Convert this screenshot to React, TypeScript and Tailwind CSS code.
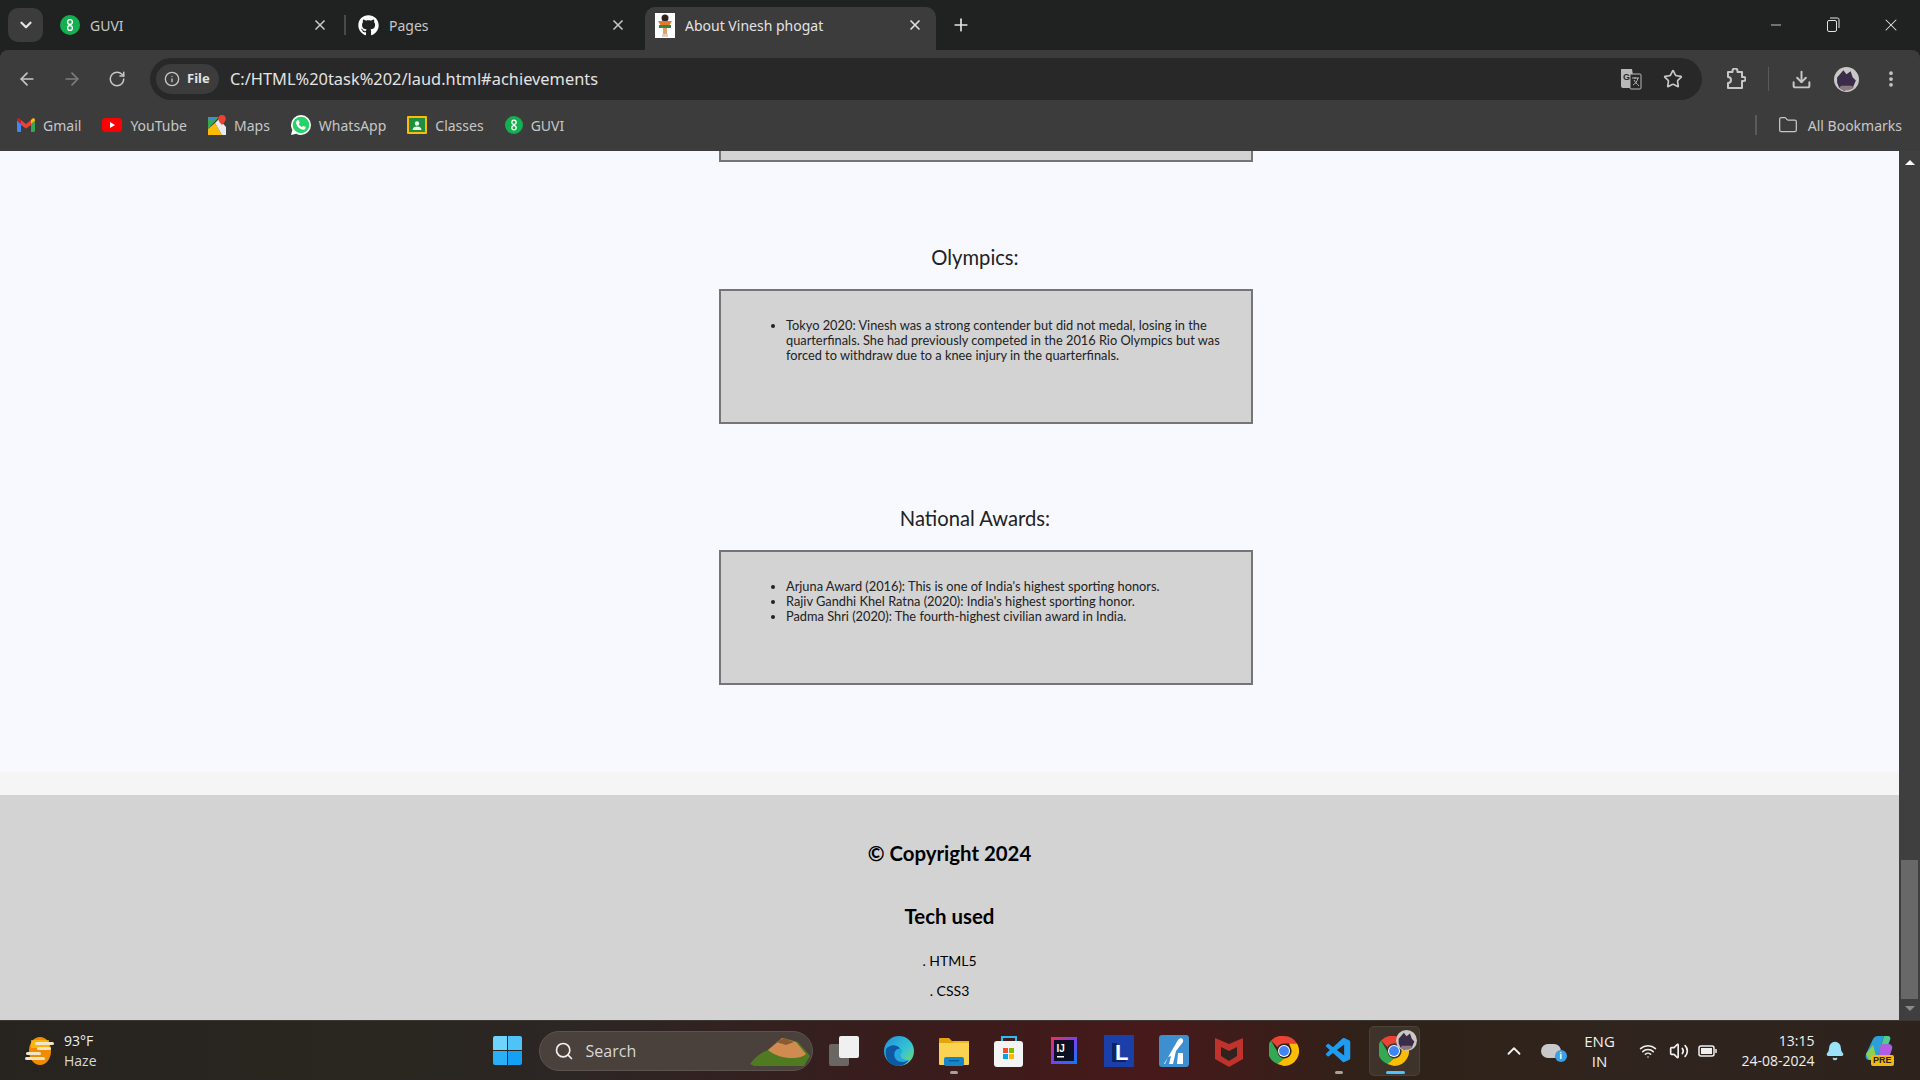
import { ArrowLeft, ArrowRight, RotateCw, Info, X, Plus, ChevronDown, ChevronUp, Star, Download, MoreVertical, Folder, Minus, Search, Bell, Wifi, Volume2 } from 'lucide-react';
import { FaGithub } from 'react-icons/fa';
import { VscVscode } from 'react-icons/vsc';

function GuviIcon({ size = 20 }: { size?: number }) {
  return (
    <svg width={size} height={size} viewBox="0 0 20 20">
      <circle cx="10" cy="10" r="10" fill="#14b04f" />
      <circle cx="10" cy="7" r="2.4" fill="none" stroke="#fff" strokeWidth="1.4" />
      <circle cx="10" cy="13" r="2.4" fill="none" stroke="#fff" strokeWidth="1.4" />
    </svg>
  );
}

function GmailIcon() {
  return (
    <svg width="18" height="14" viewBox="0 0 18 14">
      <path d="M0 2v10.500A1.500 1.500 0 0 0 1.500 14H4V6z" fill="#4285f4" />
      <path d="M18 2v10.500a1.500 1.500 0 0 1-1.500 1.500H14V6z" fill="#34a853" />
      <path d="M4 7 9 10.500 14 7V2L9 6 4 2z" fill="#ea4335" />
      <path d="M0 2.500 4 6V2L2.500.6C1.500-.2 0 .5 0 2z" fill="#c5221f" />
      <path d="M18 2.500 14 6V2l1.500-1.400C16.500-.2 18 .5 18 2z" fill="#fbbc04" />
    </svg>
  );
}

function YoutubeIcon() {
  return (
    <svg width="20" height="14" viewBox="0 0 20 14">
      <rect width="20" height="14" rx="3.500" fill="#f00" />
      <path d="M8 4v6l5-3z" fill="#fff" />
    </svg>
  );
}

function MapsIcon() {
  return (
    <svg width="18" height="20" viewBox="0 0 18 20">
      <path d="M0 2h11L0 14z" fill="#34a853" />
      <path d="M0 14 7 8l7 12H0z" fill="#fbbc04" />
      <path d="M7 8l4-4 7 8v8h-4z" fill="#e8eaed" />
      <path d="M0 2h8L4 6 0 3z" fill="#4285f4" />
      <path d="M14 0a3.800 3.800 0 0 1 3.800 3.800C17.800 6.500 14 10 14 10s-3.800-3.500-3.800-6.200A3.800 3.800 0 0 1 14 0z" fill="#ea4335" />
    </svg>
  );
}

function WhatsappIcon() {
  return (
    <svg width="20" height="20" viewBox="0 0 20 20">
      <path d="M10 0a10 10 0 0 1 0 20c-1.800 0-3.400-.4-4.800-1.200L0 20l1.300-5C.5 13.500 0 11.800 0 10A10 10 0 0 1 10 0z" fill="#fff" />
      <circle cx="10" cy="10" r="8.300" fill="#25d366" />
      <path d="M7 5c.5 0 .8.200 1 .8l.6 1.500c.1.400 0 .7-.3 1l-.6.700c.7 1.400 1.800 2.400 3.200 3.100l.8-.8c.3-.3.600-.3 1-.2l1.500.7c.5.200.6.600.5 1-.2 1.200-1.200 2-2.500 1.900-3.700-.4-6.700-3.400-7.100-7C5 6.300 5.800 5.200 7 5z" fill="#fff" />
    </svg>
  );
}

function ClassesIcon() {
  return (
    <svg width="20" height="18" viewBox="0 0 20 18">
      <rect width="20" height="18" rx="1" fill="#fbbc04" />
      <rect x="2" y="2" width="16" height="14" fill="#1e8e3e" />
      <circle cx="10" cy="7.500" r="2.200" fill="#e6f4ea" />
      <path d="M5.500 14c0-2.500 2-3.500 4.500-3.500s4.500 1 4.500 3.500z" fill="#e6f4ea" />
    </svg>
  );
}

function TabFace() {
  return (
    <svg width="20" height="25" viewBox="0 0 20 25">
      <rect width="20" height="25" fill="#fff" />
      <circle cx="10" cy="5" r="3.500" fill="#2b2320" />
      <path d="M3 8h14l-3 5H6z" fill="#e8772e" />
      <rect x="4" y="12" width="12" height="3" fill="#2e8b3d" />
      <rect x="8" y="15" width="4" height="6" fill="#e3a06a" />
      <rect x="7" y="21" width="6" height="3" fill="#d9cfc6" />
    </svg>
  );
}

function Avatar({ size }: { size: number }) {
  return (
    <svg width={size} height={size} viewBox="0 0 24 24">
      <circle cx="12" cy="12" r="12" fill="#c9c8c4" />
      <path d="M3 10 9 3l3 4 4-3 2 6 3 3-3 7-5-1-3 4-5-3-2-5z" fill="#3b2c4a" />
      <path d="M5 20c3 3 9 4 14 0l-2-2H7z" fill="#8a7a80" />
    </svg>
  );
}

function ChromeIcon() {
  return (
    <svg width="30" height="30" viewBox="0 0 30 30">
      <path d="M15 0a15 15 0 0 1 13 7.500H15a7.500 7.500 0 0 0-6.500 3.750L2 4.500A15 15 0 0 1 15 0z" fill="#ea4335" />
      <path d="M2 4.500l6.500 11.250A7.500 7.500 0 0 0 15 22.500L8.500 28A15 15 0 0 1 2 4.500z" fill="#34a853" />
      <path d="M28 7.500A15 15 0 0 1 15 30l-6.500-2 6.500-5.500a7.500 7.500 0 0 0 6.500-11.250L20 7.500z" fill="#fbbc04" />
      <circle cx="15" cy="15" r="6" fill="#fff" />
      <circle cx="15" cy="15" r="5" fill="#4285f4" />
    </svg>
  );
}

function EdgeIcon() {
  return (
    <svg width="30" height="32" viewBox="0 0 30 32">
      <defs>
        <linearGradient id="edgeTop" x1="0" y1="0" x2="1" y2="1">
          <stop offset="0" stopColor="#1d8fe0" />
          <stop offset="0.6" stopColor="#37c6d0" />
          <stop offset="1" stopColor="#7fdb50" />
        </linearGradient>
      </defs>
      <circle cx="15" cy="16" r="15" fill="url(#edgeTop)" />
      <path d="M2 14c4-5 12-5 14 0 1 2-2 3-2 6 0 4 5 7 11 5-3 4-7 6-11 6C6 31 0 24 2 14z" fill="#0c59a4" />
      <path d="M11 23c-2-5 1-10 5-9 2 .5 3 2 2 3-2 2-2 5 1 7 2 1 4 1 6 1-4 3-12 3-14-2z" fill="#28a4e0" />
    </svg>
  );
}

function ExplorerIcon() {
  return (
    <svg width="30" height="30" viewBox="0 0 30 30">
      <path d="M0 3a1 1 0 0 1 1-1h9l3 3h16a1 1 0 0 1 1 1v4H0z" fill="#e3a50b" />
      <path d="M0 7h30v21a1 1 0 0 1-1 1H1a1 1 0 0 1-1-1z" fill="#fbd352" />
      <path d="M5 7h8l2-2h15v2z" fill="#f2b81c" />
      <rect x="5" y="21" width="20" height="9" rx="2" fill="#1586c9" />
      <rect x="10" y="24" width="10" height="1.500" fill="#0c5e96" />
    </svg>
  );
}

function StoreIcon() {
  return (
    <svg width="30" height="32" viewBox="0 0 30 32">
      <path d="M8 6V2h14v4" fill="none" stroke="#2bbcf0" strokeWidth="2" />
      <rect y="6" width="29" height="26" rx="3" fill="#f4f4f4" />
      <rect x="9" y="13" width="5" height="5" fill="#f25022" />
      <rect x="15" y="13" width="5" height="5" fill="#7fba00" />
      <rect x="9" y="19" width="5" height="5" fill="#00a4ef" />
      <rect x="15" y="19" width="5" height="5" fill="#ffb900" />
    </svg>
  );
}

function IntellijIcon() {
  return (
    <svg width="26" height="27" viewBox="0 0 26 27">
      <defs>
        <linearGradient id="ijEdge" x1="0" y1="0" x2="1" y2="1">
          <stop offset="0" stopColor="#fe2857" />
          <stop offset="0.5" stopColor="#7a3ff0" />
          <stop offset="1" stopColor="#087cfa" />
        </linearGradient>
      </defs>
      <rect width="26" height="27" fill="url(#ijEdge)" />
      <rect x="3" y="3" width="20" height="21" fill="#0b1024" />
      <rect x="6" y="19" width="7" height="1.500" fill="#fff" />
      <text x="5.500" y="14.500" fill="#fff" fontSize="10" fontWeight="700" fontFamily="Liberation Sans, sans-serif">IJ</text>
    </svg>
  );
}

function LetterLIcon() {
  return (
    <svg width="30" height="32" viewBox="0 0 30 32">
      <rect width="30" height="32" fill="#1b3fa8" />
      <path d="M8 8h5v16h9v3H8z" fill="#0d2360" />
      <text x="11" y="25" fill="#fff" fontSize="22" fontWeight="700" fontFamily="Liberation Sans, sans-serif">L</text>
    </svg>
  );
}

function AnalyzerIcon() {
  return (
    <svg width="30" height="32" viewBox="0 0 30 32">
      <rect width="30" height="32" rx="3" fill="#3d8fd0" />
      <path d="M5 29 19 5c2-3 6-2 5 2l-7 9-3 13H10l2-8-3 1-3 7z" fill="#fff" />
      <path d="M19 18h5v11h-6z" fill="#fff" />
    </svg>
  );
}

function McafeeIcon() {
  return (
    <svg width="28" height="32" viewBox="0 0 28 32">
      <path d="M0 3 14 9 28 3v21L14 32 0 24z" fill="#c0322c" />
      <path d="M6 12v9l8 5 8-5v-9l-8 4z" fill="#2f2320" />
    </svg>
  );
}

function WeatherIcon() {
  return (
    <svg width="30" height="30" viewBox="0 0 30 30">
      <ellipse cx="15" cy="15" rx="11" ry="14" fill="#f08c00" />
      <path d="M6 4h18v8H6z" fill="#fcc419" opacity="0.7" />
      <rect x="10" y="6" width="19" height="3" rx="1.500" fill="#f3e6c8" />
      <rect x="12" y="11" width="14" height="3" rx="1.500" fill="#f3e6c8" />
      <rect x="1" y="16" width="15" height="3" rx="1.500" fill="#f3e6c8" />
      <rect x="0" y="21" width="20" height="3" rx="1.500" fill="#f3e6c8" />
    </svg>
  );
}

function SearchArt() {
  return (
    <svg width="62" height="30" viewBox="0 0 62 30">
      <path d="M0 28c6-8 12-12 18-14L34 2l14 4 12 14-6 10H4z" fill="#4f7a22" />
      <path d="M18 14 32 2l14 4 10 12c-6 6-26 6-38-4z" fill="#d08c50" />
      <path d="M26 6 34 2l10 4-8 3z" fill="#8c5a32" />
    </svg>
  );
}

function CopilotIcon() {
  return (
    <div className="relative w-[30px] h-[30px]">
      <svg width="30" height="26" viewBox="0 0 30 26">
        <path d="M2 18 9 3c1-2 3-3 5-3h6l-6 20c-1 3-3 4-5 4H5c-3 0-4-3-3-6z" fill="#2a9fd8" />
        <path d="M14 20 20 0h4c2 0 3 2 2 4l-6 16z" fill="#4bd08c" />
        <path d="M17 8h7c3 0 5 2 4 5l-3 9c-1 2-2 3-4 3h-8z" fill="#b05ee0" />
        <path d="M2 18 9 9l3 11-3 4H5z" fill="#8fd14f" />
      </svg>
      <span className="absolute right-0 bottom-0 h-[11px] px-[2px] rounded-[2px] bg-[#f5b70e] text-[9px] leading-[11px] font-bold text-[#222] font-['Liberation_Sans',sans-serif]">PRE</span>
    </div>
  );
}

function WinLogo() {
  return (
    <div className="grid grid-cols-2 gap-[1px] w-[29px] h-[29px]">
      <div className="bg-[#6fd3fb] rounded-tl-[2px]" />
      <div className="bg-[#4fc3f7] rounded-tr-[2px]" />
      <div className="bg-[#29b0f5] rounded-bl-[2px]" />
      <div className="bg-[#14a0f5] rounded-br-[2px]" />
    </div>
  );
}

function TaskIcon({ children, dot, active }: { children: React.ReactNode; dot?: boolean; active?: boolean }) {
  return (
    <div className={`relative flex items-center justify-center w-[51px] h-[50px] rounded-[5px] ${active ? 'bg-[#ffffff14] border border-[#ffffff12]' : ''}`}>
      {children}
      {dot && <span className="absolute bottom-[2px] left-[21px] w-[8px] h-[3px] rounded-full bg-[#a8a09c]" />}
      {active && <span className="absolute bottom-[1px] left-[16px] w-[19px] h-[3px] rounded-full bg-[#4cc2ff]" />}
    </div>
  );
}

const bookmarks = [
  { label: 'Gmail', icon: <GmailIcon /> },
  { label: 'YouTube', icon: <YoutubeIcon /> },
  { label: 'Maps', icon: <MapsIcon /> },
  { label: 'WhatsApp', icon: <WhatsappIcon /> },
  { label: 'Classes', icon: <ClassesIcon /> },
  { label: 'GUVI', icon: <GuviIcon size={18} /> },
];

function Section({ title, items }: { title: string; items: string[] }) {
  return (
    <section className="w-[534px] ml-[719px]">
      <h3 className="w-[512px] h-[31px] text-center text-[20.2px] leading-[29px] text-[#222]">{title}</h3>
      <div className="mt-[15px] h-[135px] border-2 border-[#757575] bg-[#d3d3d3] pt-[27px] pl-[25px] pr-[20px]">
        <ul className="list-disc pl-[40px] text-[12.8px] leading-[15px] text-[#222]">
          {items.map((item) => (
            <li key={item}>{item}</li>
          ))}
        </ul>
      </div>
    </section>
  );
}

export default function App() {
  return (
    <div className="w-[1920px] h-[1080px] overflow-hidden flex flex-col bg-[#202222] font-['Noto_Sans',sans-serif]">
      {/* Tab strip */}
      <div className="h-[50px] bg-[#202222] flex text-[14px] text-[#c7c7c7]">
        <div className="flex items-center w-[35px] h-[34px] mt-[8px] ml-[8px] justify-center rounded-[10px] bg-[#3c3c3c]">
          <ChevronDown size={18} strokeWidth={3} className="text-[#e3e3e3]" />
        </div>
        <div className="flex items-center h-[50px] w-[301px] pl-[17px]">
          <GuviIcon />
          <span className="ml-[10px]">GUVI</span>
          <X size={16} strokeWidth={2.5} className="ml-auto mr-[16px]" />
        </div>
        <div className="w-[2px] h-[20px] mt-[15px] bg-[#4a4a4a]" />
        <div className="flex items-center h-[50px] w-[299px] pl-[12px]">
          <FaGithub size={21} className="text-white" />
          <span className="ml-[10px]">Pages</span>
          <X size={16} strokeWidth={2.5} className="ml-auto mr-[19px]" />
        </div>
        <div className="flex items-center w-[291px] h-[43px] mt-[7px] pl-[10px] pb-[7px] bg-[#3c3c3c] rounded-t-[10px] text-[#e3e3e3]">
          <TabFace />
          <span className="ml-[10px]">About Vinesh phogat</span>
          <X size={16} strokeWidth={2.5} className="ml-auto mr-[13px]" />
        </div>
        <Plus size={20} strokeWidth={2} className="mt-[15px] ml-[15px] text-[#e3e3e3]" />
        <div className="ml-auto flex items-start pt-[17px] text-[#e3e3e3]">
          <Minus size={16} strokeWidth={1.25} />
          <svg width="14" height="16" viewBox="0 0 14 16" className="ml-[42px]" fill="none" stroke="#e3e3e3">
            <rect x="1.500" y="3.500" width="9" height="11" rx="1.500" />
            <path d="M4 1h7.500a1.500 1.500 0 0 1 1.500 1.500V11" />
          </svg>
          <X size={20} strokeWidth={1.25} className="ml-[41px] mr-[19px] -mt-[2px]" />
        </div>
      </div>

      {/* Address bar */}
      <div className="h-[58px] bg-[#3c3c3c] rounded-t-[8px] flex items-center text-[#c7c7c7]">
        <ArrowLeft size={20} className="ml-[17px]" />
        <ArrowRight size={20} className="ml-[25px] text-[#7d7d7d]" />
        <RotateCw size={18} className="ml-[26px]" />
        <div className="ml-[24px] w-[1552px] h-[42px] rounded-full bg-[#282828] flex items-center pl-[6px] pr-[19px]">
          <div className="flex items-center h-[30px] w-[63px] pl-[8px] rounded-full bg-[#3c3c3c]">
            <Info size={16} />
            <span className="ml-[7px] text-[13px] font-bold text-[#e3e3e3]">File</span>
          </div>
          <span className="ml-[11px] text-[16.4px] text-[#e3e3e3]">C:/HTML%20task%202/laud.html#achievements</span>
          <div className="ml-auto flex items-center gap-[21px]">
            <svg width="22" height="22" viewBox="0 0 22 22">
              <path d="M1 1h11l3 19H3a2 2 0 0 1-2-2z" fill="#b8b8b8" />
              <rect x="10" y="6" width="11" height="15" rx="1" fill="#282828" stroke="#b8b8b8" />
              <text x="3" y="12" fill="#282828" fontSize="9" fontWeight="700" fontFamily="Liberation Sans, sans-serif">G</text>
              <path d="M12 10h7M15 9v2M18 10c-1 4-3 6-5 7M14 12c1 2 3 4 5 6" stroke="#b8b8b8" fill="none" />
            </svg>
            <Star size={20} />
          </div>
        </div>
        <svg width="20" height="22" viewBox="0 0 20 22" className="ml-[24px]" fill="none" stroke="#c7c7c7" strokeWidth="2" strokeLinejoin="round">
          <path d="M2 4h4.500V3a2.500 2.500 0 0 1 5 0v1H16v5h1.500a2 2 0 0 1 0 4H16v7H2v-5a3 3 0 0 0 0-6z" />
        </svg>
        <div className="ml-[22px] w-[1px] h-[24px] bg-[#5a5a5a]" />
        <Download size={21} strokeWidth={2.25} className="ml-[22px]" />
        <div className="ml-[22px]"><Avatar size={25} /></div>
        <MoreVertical size={20} strokeWidth={2.5} className="ml-[22px]" />
      </div>

      {/* Bookmarks */}
      <div className="h-[43px] pb-[9px] bg-[#3c3c3c] flex items-center pl-[17px] text-[14px] text-[#c7c7c7]">
        {bookmarks.map((b) => (
          <div key={b.label} className="flex items-center mr-[21px]">
            {b.icon}
            <span className="ml-[8px]">{b.label}</span>
          </div>
        ))}
        <div className="ml-auto w-[2px] h-[20px] bg-[#5a5a5a]" />
        <Folder size={20} strokeWidth={1.5} className="ml-[21px]" />
        <span className="ml-[10px] mr-[18px]">All Bookmarks</span>
      </div>

      {/* Page */}
      <div className="flex-1 flex min-h-0 font-['Lato',sans-serif]">
        <main className="flex-1 flex flex-col bg-[#f8f9ff] overflow-hidden">
          <div className="w-[534px] ml-[719px] h-[11px] border-x-2 border-b-2 border-[#757575] bg-[#d3d3d3]" />
          <div className="mt-[81px]">
            <Section
              title="Olympics:"
              items={[
                'Tokyo 2020: Vinesh was a strong contender but did not medal, losing in the quarterfinals. She had previously competed in the 2016 Rio Olympics but was forced to withdraw due to a knee injury in the quarterfinals.',
              ]}
            />
          </div>
          <div className="mt-[80px]">
            <Section
              title="National Awards:"
              items={[
                "Arjuna Award (2016): This is one of India's highest sporting honors.",
                'Rajiv Gandhi Khel Ratna (2020): India\'s highest sporting honor.',
                'Padma Shri (2020): The fourth-highest civilian award in India.',
              ]}
            />
          </div>
          <div className="mt-[87px] h-[23px] bg-[#f5f5f5]" />
          <footer className="flex-1 bg-[#d3d3d3] text-center text-black">
            <h3 className="mt-[46px] text-[20.4px] font-bold leading-[24px]">© Copyright 2024</h3>
            <h3 className="mt-[39px] text-[20.4px] font-bold leading-[24px]">Tech used</h3>
            <p className="mt-[24px] text-[14px] leading-[18px]">. HTML5</p>
            <p className="mt-[12px] text-[14px] leading-[18px]">. CSS3</p>
          </footer>
        </main>
        <aside className="w-[21px] bg-[#3f3f3f] flex flex-col items-center">
          <svg width="10" height="5" viewBox="0 0 10 5" className="mt-[9px]"><path d="M5 0l5 5H0z" fill="#fff" /></svg>
          <div className="mt-auto w-[17px] h-[139px] bg-[#686868]" />
          <svg width="10" height="5" viewBox="0 0 10 5" className="mt-[7px] mb-[9px]"><path d="M0 0h10L5 5z" fill="#8a8a8a" /></svg>
        </aside>
      </div>

      {/* Taskbar */}
      <div className="h-[60px] flex items-center border-t border-[#3d3733] bg-[linear-gradient(90deg,#27231f_0%,#2a2620_20%,#2c2624_30%,#3a1c1c_48%,#47191a_60%,#2e2218_72%,#30241e_85%,#2e221c_100%)] text-[#f0f0f0] font-['Open_Sans',sans-serif]">
        <div className="ml-[25px]"><WeatherIcon /></div>
        <div className="ml-[9px] text-[14px] leading-[20px]">
          <div>93°F</div>
          <div className="text-[#d8d8d8]">Haze</div>
        </div>
        <div className="ml-[396px]"><WinLogo /></div>
        <div className="ml-[17px] w-[274px] h-[40px] rounded-full bg-[#4a413c] border border-[#5c534e] flex items-center pl-[14px] overflow-hidden">
          <Search size={20} />
          <span className="ml-[12px] text-[16px] text-[#d8d8d8]">Search</span>
          <div className="ml-auto"><SearchArt /></div>
        </div>
        <div className="ml-[16px] relative w-[30px] h-[30px]">
          <div className="w-[20px] h-[22px] mt-[8px] bg-[#6a6663] rounded-[2px]" />
          <div className="absolute right-0 top-0 w-[20px] h-[22px] bg-[#f0f0f0] rounded-[2px]" />
        </div>
        <div className="ml-[15px] flex gap-[4px]">
          <TaskIcon><EdgeIcon /></TaskIcon>
          <TaskIcon dot><ExplorerIcon /></TaskIcon>
          <TaskIcon><StoreIcon /></TaskIcon>
          <TaskIcon><IntellijIcon /></TaskIcon>
          <TaskIcon><LetterLIcon /></TaskIcon>
          <TaskIcon><AnalyzerIcon /></TaskIcon>
          <TaskIcon><McafeeIcon /></TaskIcon>
          <TaskIcon><ChromeIcon /></TaskIcon>
          <TaskIcon dot><VscVscode size={30} className="text-[#1f9cf0]" /></TaskIcon>
          <TaskIcon active>
            <ChromeIcon />
            <div className="absolute right-[2px] top-[3px]"><Avatar size={21} /></div>
          </TaskIcon>
        </div>
        <ChevronUp size={22} className="ml-[83px]" />
        <div className="relative ml-[16px] w-[20px] h-[14px] rounded-full bg-[#c9c9c9]">
          <span className="absolute -right-[6px] -bottom-[4px] w-[12px] h-[12px] rounded-full bg-[#3aa0e8] text-white text-[9px] leading-[12px] text-center font-bold">i</span>
        </div>
        <div className="ml-[22px] w-[34px] text-center text-[15px] leading-[20px]">
          <div>ENG</div>
          <div>IN</div>
        </div>
        <Wifi size={18} className="ml-[22px]" />
        <Volume2 size={20} className="ml-[12px]" />
        <svg width="19" height="15" viewBox="0 0 19 15" className="ml-[9px]" fill="none" stroke="#f0f0f0" strokeWidth="1.500">
          <rect x="1" y="3" width="15" height="10" rx="2" />
          <rect x="3" y="5" width="11" height="6" fill="#f0f0f0" stroke="none" />
          <path d="M18 6v4" />
        </svg>
        <div className="ml-[20px] w-[78px] text-right text-[14px] leading-[20px]">
          <div>13:15</div>
          <div>24-08-2024</div>
        </div>
        <Bell size={20} fill="#9be2fb" className="ml-[10px] text-[#9be2fb]" />
        <div className="ml-[19px]"><CopilotIcon /></div>
      </div>
    </div>
  );
}
